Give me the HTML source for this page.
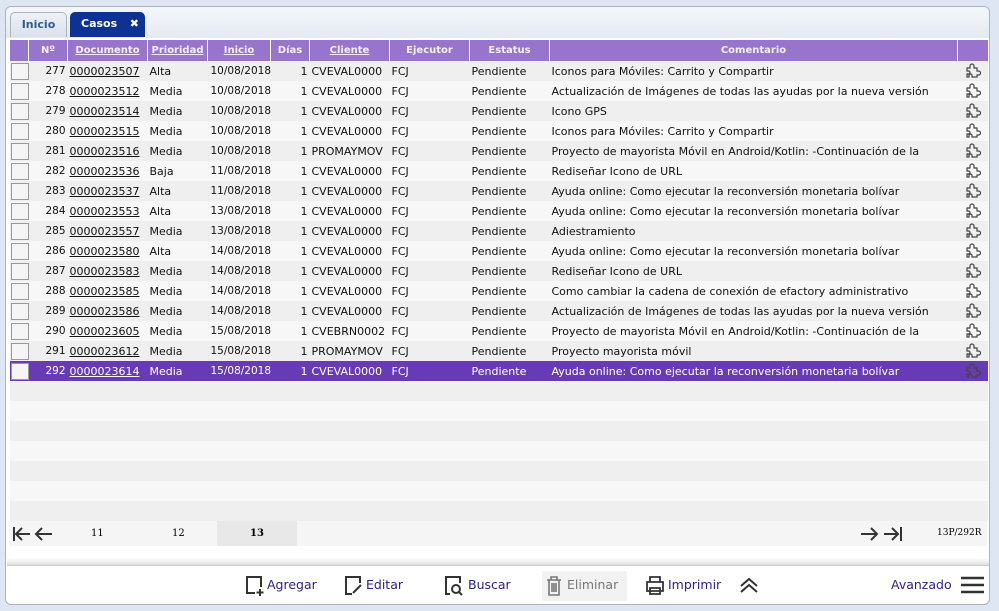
<!DOCTYPE html>
<html><head><meta charset="utf-8"><style>
*{box-sizing:border-box;margin:0;padding:0}
body{width:999px;height:611px;background:#dde6f2;font-family:"DejaVu Sans","Liberation Sans",sans-serif;position:relative;overflow:hidden}
.panel{position:absolute;left:5px;top:6px;width:985px;height:599px;background:#fff;border:1px solid #aab3bf;border-radius:6px}
.tabbar{position:absolute;left:6px;top:7px;width:983px;height:31px;background:linear-gradient(#f4f7fb,#e4eaf2);border-radius:5px 5px 0 0}
.tab{position:absolute;top:12px;height:25px;border-radius:5px 5px 0 0;font-size:11px;font-weight:bold;line-height:24px}
.t1{left:10px;width:57px;background:linear-gradient(#eef2f7,#d9e1ea);border:1px solid #a9b3bf;border-bottom:none;color:#2c5e92;text-align:center}
.t2{left:70px;width:75px;background:#0d3294;color:#fff;padding-left:11px}
.t2 span{position:absolute;right:6px;top:0}
table{position:absolute;left:9px;top:40px;width:978px;border-collapse:collapse;table-layout:fixed;font-size:11px}
th{height:21px;background:#9775cc;color:#f3eefc;font-size:10px;font-weight:bold;border-left:1px solid #fff;text-align:center;padding:0}
th u{text-decoration:underline}
td{height:20px;white-space:nowrap;overflow:hidden;padding:0 2px;color:#111}
tr.a td{background:#efefef}tr.b td{background:#f7f7f7}
tr.s td{background:#683bb6;color:#fff}
td.n{text-align:right}
td.d{text-decoration:underline}
td.dt{font-size:10.5px;padding-left:3px}
.cb{display:block;width:18px;height:17px;border:1px solid #999;background:#f5f5f5;margin-left:0}
tr.e td{height:20px}
.pg{position:absolute;left:9px;top:521px;width:978px;height:25px;background:#f5f5f5;font-size:10px;font-family:"DejaVu Serif","Liberation Serif",serif}
.pg span{position:absolute;top:0;line-height:25px}
.shadow{position:absolute;left:7px;top:558px;width:982px;height:8px;background:linear-gradient(#fff,#e0e0e0);border-bottom:1px solid #ccc}
.tb{position:absolute;top:575px;font-size:12.5px;color:#2a2390;line-height:20px}
.tb svg{position:absolute;top:0}
</style></head><body>
<div class="panel"></div>
<div class="tabbar"></div>
<div class="tab t1">Inicio</div>
<div class="tab t2">Casos<span>✖</span></div>
<table>
<colgroup><col style="width:19px"><col style="width:39px"><col style="width:80px"><col style="width:60px"><col style="width:63px"><col style="width:39px"><col style="width:80px"><col style="width:80px"><col style="width:80px"><col style="width:408px"><col style="width:30px"></colgroup>
<tr><th></th><th>Nº</th><th><u>Documento</u></th><th><u>Prioridad</u></th><th><u>Inicio</u></th><th>Días</th><th><u>Cliente</u></th><th>Ejecutor</th><th>Estatus</th><th>Comentario</th><th></th></tr>
<tbody id="tb"></tbody>
</table>
<div class="pg">
<svg style="position:absolute;left:3px;top:5px" width="42" height="16" fill="none" stroke="#333" stroke-width="2"><path d="M2 1v14M4 8h14M10 2L4 8l6 6"/><path d="M24 8h16M30 2l-6 6 6 6"/></svg>
<span style="left:82px">11</span><span style="left:163px">12</span>
<span style="left:208px;width:80px;background:#e8e8e8;text-align:center;font-weight:bold">13</span>
<svg style="position:absolute;left:851px;top:5px" width="44" height="16" fill="none" stroke="#333" stroke-width="2"><path d="M1 8h16M11 2l6 6-6 6"/><path d="M24 8h14M32 2l6 6-6 6M41 1v14"/></svg>
<span style="left:928px;font-size:9px">13P/292R</span>
</div>
<div class="shadow"></div>
<div class="tb" style="left:245px"><svg width="20" height="22" fill="none" stroke="#333" stroke-width="2"><path d="M10 18H2V2h14v10"/><path d="M15 14v7M11.5 17.5h7"/></svg><span style="margin-left:22px">Agregar</span></div>
<div class="tb" style="left:344px"><svg width="20" height="22" fill="none" stroke="#333" stroke-width="2"><path d="M8 19H2V2h14v6"/><path d="M9 18l8-8"/></svg><span style="margin-left:22px">Editar</span></div>
<div class="tb" style="left:444px"><svg width="20" height="22" fill="none" stroke="#333" stroke-width="2"><path d="M6 19H2V2h14v6"/><circle cx="12" cy="14" r="4"/><path d="M15 17l3 3"/></svg><span style="margin-left:24px">Buscar</span></div>
<div style="position:absolute;left:542px;top:571px;width:85px;height:30px;background:#f2f2f2"></div>
<div class="tb" style="left:545px;color:#777"><svg width="18" height="22" fill="none" stroke="#777" stroke-width="1.6"><path d="M2 5h14M6 5V2h6v3M4 5v15h10V5M7 8v9M9 8v9M11 8v9"/></svg><span style="margin-left:22px">Eliminar</span></div>
<div class="tb" style="left:645px"><svg width="20" height="22" fill="none" stroke="#333" stroke-width="1.8"><path d="M5 7V2h10v5M2 7h16v9H2zM5 13h10v6H5z"/></svg><span style="margin-left:23px">Imprimir</span></div>
<svg style="position:absolute;left:739px;top:577px" width="20" height="16" fill="none" stroke="#333" stroke-width="2"><path d="M2 9l8-7 8 7M2 15l8-7 8 7"/></svg>
<div class="tb" style="left:891px">Avanzado</div>
<svg style="position:absolute;left:961px;top:576px" width="23" height="18" stroke="#333" stroke-width="2.4"><path d="M0 2h23M0 9h23M0 16h23"/></svg>
<script>
var rows=[["277","0000023507","Alta","10/08/2018","CVEVAL0000","Iconos para Móviles: Carrito y Compartir"],
["278","0000023512","Media","10/08/2018","CVEVAL0000","Actualización de Imágenes de todas las ayudas por la nueva versión"],
["279","0000023514","Media","10/08/2018","CVEVAL0000","Icono GPS"],
["280","0000023515","Media","10/08/2018","CVEVAL0000","Iconos para Móviles: Carrito y Compartir"],
["281","0000023516","Media","10/08/2018","PROMAYMOV","Proyecto de mayorista Móvil en Android/Kotlin: -Continuación de la"],
["282","0000023536","Baja","11/08/2018","CVEVAL0000","Rediseñar Icono de URL"],
["283","0000023537","Alta","11/08/2018","CVEVAL0000","Ayuda online: Como ejecutar la reconversión monetaria bolívar"],
["284","0000023553","Alta","13/08/2018","CVEVAL0000","Ayuda online: Como ejecutar la reconversión monetaria bolívar"],
["285","0000023557","Media","13/08/2018","CVEVAL0000","Adiestramiento"],
["286","0000023580","Alta","14/08/2018","CVEVAL0000","Ayuda online: Como ejecutar la reconversión monetaria bolívar"],
["287","0000023583","Media","14/08/2018","CVEVAL0000","Rediseñar Icono de URL"],
["288","0000023585","Media","14/08/2018","CVEVAL0000","Como cambiar la cadena de conexión de efactory administrativo"],
["289","0000023586","Media","14/08/2018","CVEVAL0000","Actualización de Imágenes de todas las ayudas por la nueva versión"],
["290","0000023605","Media","15/08/2018","CVEBRN0002","Proyecto de mayorista Móvil en Android/Kotlin: -Continuación de la"],
["291","0000023612","Media","15/08/2018","PROMAYMOV","Proyecto mayorista móvil"],
["292","0000023614","Media","15/08/2018","CVEVAL0000","Ayuda online: Como ejecutar la reconversión monetaria bolívar"]];
var pz='<svg width="18" height="16" fill="none" stroke="#444" stroke-width="1.2"><path d="M3 6h3V4a2 2 0 014 0v2h3v3h1.5a2 2 0 010 4H13v2H8v-1.5a1.5 1.5 0 00-3 0V15H3v-3h1.5a1.5 1.5 0 000-3H3z"/></svg>';
var h='';rows.forEach(function(r,i){var c=i==15?'s':(i%2?'b':'a');
h+='<tr class="'+c+'"><td style="padding:0 0 0 1px"><span class="cb"></span></td><td class="n" style="font-size:10.5px">'+r[0]+'</td><td class="d">'+r[1]+'</td><td>'+r[2]+'</td><td class="dt">'+r[3]+'</td><td class="n">1</td><td>'+r[4]+'</td><td>FCJ</td><td>Pendiente</td><td>'+r[5]+'</td><td style="padding-left:6px">'+pz+'</td></tr>';});
for(var i=0;i<7;i++)h+='<tr class="e '+(i%2?'b':'a')+'"><td colspan="11"></td></tr>';
document.getElementById('tb').innerHTML=h;
</script>
</body></html>
